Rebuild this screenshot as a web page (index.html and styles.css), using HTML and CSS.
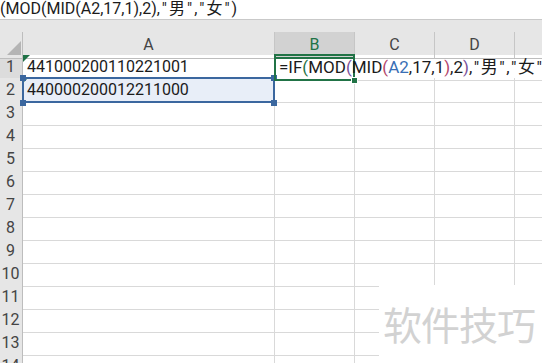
FILE: index.html
```html
<!DOCTYPE html>
<html lang="zh-CN">
<head>
    <meta charset="UTF-8">
    <title>Sheet1</title>
    <link rel="stylesheet" href="styles.css">
</head>
<body>
    <div class="formula-bar">(MOD(MID(A2,17,1),2),<span class="q">"</span>男<span class="q">"</span>,<span class="q">"</span>女<span class="q">"</span>)</div>
    <div class="band"></div>

    <div class="sheet">
        <div class="row head">
            <div class="rh corner"><span class="tri"></span></div>
            <div class="ch">A</div>
            <div class="ch active">B</div>
            <div class="ch">C</div>
            <div class="ch">D</div>
            <div class="ch"></div>
        </div>

        <div class="row">
            <div class="rh cur">1</div>
            <div class="c txt"><span class="err"></span>441000200110221001</div>
            <div class="c edit"><span class="formula">=IF<i class="p1">(</i>MOD<i class="p2">(</i>MID<i class="p3">(</i><i class="ref">A2</i>,17,1<i class="p3">)</i>,2<i class="p2">)</i>,<span class="q">"</span>男<span class="q">"</span>,<span class="q">"</span>女<span class="q">"</span></span></div>
            <div class="c nob"></div>
            <div class="c nob"></div>
            <div class="c nob"></div>
        </div>
        <div class="row">
            <div class="rh">2</div>
            <div class="c txt picked"><span class="err small"></span>440000200012211000<b class="h tl"></b><b class="h tr"></b><b class="h bl"></b><b class="h br"></b></div>
            <div class="c"></div><div class="c"></div><div class="c"></div><div class="c"></div>
        </div>
        <div class="row"><div class="rh">3</div><div class="c"></div><div class="c"></div><div class="c"></div><div class="c"></div><div class="c"></div></div>
        <div class="row"><div class="rh">4</div><div class="c"></div><div class="c"></div><div class="c"></div><div class="c"></div><div class="c"></div></div>
        <div class="row"><div class="rh">5</div><div class="c"></div><div class="c"></div><div class="c"></div><div class="c"></div><div class="c"></div></div>
        <div class="row"><div class="rh">6</div><div class="c"></div><div class="c"></div><div class="c"></div><div class="c"></div><div class="c"></div></div>
        <div class="row"><div class="rh">7</div><div class="c"></div><div class="c"></div><div class="c"></div><div class="c"></div><div class="c"></div></div>
        <div class="row"><div class="rh">8</div><div class="c"></div><div class="c"></div><div class="c"></div><div class="c"></div><div class="c"></div></div>
        <div class="row"><div class="rh">9</div><div class="c"></div><div class="c"></div><div class="c"></div><div class="c"></div><div class="c"></div></div>
        <div class="row"><div class="rh">10</div><div class="c"></div><div class="c"></div><div class="c"></div><div class="c"></div><div class="c"></div></div>
        <div class="row"><div class="rh">11</div><div class="c"></div><div class="c"></div><div class="c"></div><div class="c"></div><div class="c"></div></div>
        <div class="row"><div class="rh">12</div><div class="c"></div><div class="c"></div><div class="c"></div><div class="c"></div><div class="c"></div></div>
        <div class="row"><div class="rh">13</div><div class="c"></div><div class="c"></div><div class="c"></div><div class="c"></div><div class="c"></div></div>
        <div class="row"><div class="rh">14</div><div class="c"></div><div class="c"></div><div class="c"></div><div class="c"></div><div class="c"></div></div>
    </div>

    <div class="watermark">软件技巧</div>
</body>
</html>
```

FILE: styles.css
```css
* {
  box-sizing: border-box;
}

html, body {
  margin: 0;
  height: 100%;
  overflow: hidden;
  background: #fff;
}

body {
  position: relative;
  font-family: Roboto, "Noto Sans CJK SC", sans-serif;
  font-size: 16px;
  color: #1b1b1b;
}

/* formula bar, scrolled so only the tail shows */
.formula-bar {
  height: 20px;
  line-height: 18px;
  border-bottom: 1px solid #c9c9c9;
  white-space: nowrap;
  overflow: hidden;
  padding-left: 0;
}

/* straight quotes sit wider in the sheet font */
.q {
  margin: 0 2px;
}

.band {
  height: 12px;
  background: #e6e6e6;
}

.sheet {
  width: 600px;
}

.row {
  display: grid;
  grid-template-columns: 23px 252px 80px 80px 80px 85px;
  height: 23px;
}

.rh {
  background: #e6e6e6;
  border-right: 1px solid #bdbdbd;
  border-bottom: 1px solid #c9c9c9;
  color: #444;
  text-align: center;
  line-height: 24px;
  padding-right: 1px;
}

.rh.cur {
  background: #dcdcdc;
}

.head {
  background: #e6e6e6;
}

.corner {
  position: relative;
  border-bottom: 1px solid #bdbdbd;
}

.tri {
  position: absolute;
  right: 1px;
  bottom: 3px;
  width: 0;
  height: 0;
  border-left: 14px solid transparent;
  border-bottom: 14px solid #b4b4b4;
}

.ch {
  border-right: 1px solid #c6c6c6;
  border-bottom: 1px solid #bdbdbd;
  text-align: center;
  line-height: 25px;
  color: #444;
}

.ch.active {
  background: #d2d2d2;
  color: #217346;
  border-bottom: 2px solid #217346;
}

.c {
  position: relative;
  border-right: 1px solid #d9d9d9;
  border-bottom: 1px solid #d9d9d9;
  line-height: 24px;
  white-space: nowrap;
}

.c.nob {
  border-right-color: transparent;
}

.txt {
  padding-left: 4px;
}

/* number-stored-as-text marker */
.err {
  position: absolute;
  left: 0;
  top: 0;
  width: 0;
  height: 0;
  border-top: 7px solid #1e7145;
  border-right: 7px solid transparent;
}

.err.small {
  border-top-width: 5px;
  border-right-width: 5px;
}

/* active cell B1 */
.edit {
  overflow: visible;
  z-index: 2;
}

.edit::after {
  content: "";
  position: absolute;
  left: -1px;
  top: -1px;
  right: -1px;
  bottom: -1px;
  border: 2px solid #217346;
  pointer-events: none;
}

.edit::before {
  content: "";
  position: absolute;
  right: -4px;
  bottom: -4px;
  width: 5px;
  height: 5px;
  background: #217346;
  border: 1px solid #fff;
  z-index: 3;
}

.formula {
  position: relative;
  z-index: 4;
  padding-left: 4px;
  font-size: 17px;
}

.formula .q {
  margin: 0 1.5px;
}

.formula i {
  font-style: normal;
}

.p1 { color: #1e7145; }
.p2 { color: #7a4f9a; }
.p3 { color: #b3456a; }
.ref { color: #3a6fb5; }

/* A2 referenced by the formula */
.picked {
  background: #e8eef8;
  z-index: 1;
}

.picked::after {
  content: "";
  position: absolute;
  left: -1px;
  top: -1px;
  right: -1px;
  bottom: -1px;
  border: 2px solid #3b679f;
}

.h {
  position: absolute;
  width: 6px;
  height: 6px;
  background: #3b679f;
  z-index: 2;
}

.tl { left: -3px; top: -3px; }
.tr { right: -3px; top: -3px; }
.bl { left: -3px; bottom: -4px; }
.br { right: -3px; bottom: -4px; }

/* site stamp in the corner */
.watermark {
  position: absolute;
  left: 379px;
  top: 285px;
  right: 0;
  bottom: 0;
  background: #fff;
  color: #d2d2d2;
  font-family: "Noto Sans CJK SC", sans-serif;
  font-size: 39px;
  line-height: 1;
  padding: 19px 0 0 4px;
  letter-spacing: -1px;
  z-index: 10;
}
```
